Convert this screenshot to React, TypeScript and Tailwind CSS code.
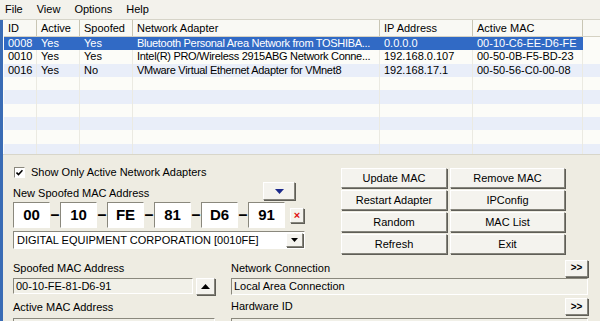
import React from 'react';

const cols = [
  { name: 'ID', w: 'w-[33px]' },
  { name: 'Active', w: 'w-[43px]' },
  { name: 'Spoofed', w: 'w-[53px]' },
  { name: 'Network Adapter', w: 'w-[247px]' },
  { name: 'IP Address', w: 'w-[93px]' },
  { name: 'Active MAC', w: 'w-[110px]' },
];

const rows = [
  ['0008', 'Yes', 'Yes', 'Bluetooth Personal Area Network from TOSHIBA...', '0.0.0.0', '00-10-C6-EE-D6-FE'],
  ['0010', 'Yes', 'Yes', 'Intel(R) PRO/Wireless 2915ABG Network Conne...', '192.168.0.107', '00-50-0B-F5-BD-23'],
  ['0016', 'Yes', 'No', 'VMware Virtual Ethernet Adapter for VMnet8', '192.168.17.1', '00-50-56-C0-00-08'],
];

const macParts = ['00', '10', 'FE', '81', 'D6', '91'];

const raised = 'border border-t-white border-l-white border-r-[#85847b] border-b-[#85847b] shadow-[1px_1px_0_#5f5e57] bg-[#f4f3ee]';
const sunken = 'border border-t-[#8a887d] border-l-[#8a887d] border-b-white border-r-white';

const Btn = ({ label }: { label: string }) => (
  <div className={`h-[20px] flex items-center justify-center text-[11px] text-black ${raised}`}>{label}</div>
);

const SmallBtn = ({ children, w }: { children: React.ReactNode; w: string }) => (
  <div className={`${w} h-[17px] flex items-center justify-center ${raised}`}>{children}</div>
);

export default function App() {
  return (
    <div className="w-[600px] h-[321px] overflow-hidden flex flex-col bg-[#eeece2] text-black text-[11px] font-['Liberation_Sans',Arial,sans-serif]">
      {/* Menu */}
      <div className="h-[20px] shrink-0 flex items-center gap-[14px] pl-[5px] bg-[#f3f2ec] border-b border-[#d6d4c8]">
        <span>File</span>
        <span>View</span>
        <span>Options</span>
        <span>Help</span>
      </div>

      <div className="flex-1 flex flex-col border-l-[3px] border-[#3a6cb5]">
        {/* List */}
        <div className="h-[135px] shrink-0 flex flex-col bg-[#fcfcf8] pl-[1px] overflow-hidden border-b border-[#d8d6ca]">
          <div className="h-[17px] shrink-0 flex bg-[#f9f9f4] border-b border-[#d5d2c3]">
            {cols.map((c) => (
              <div key={c.name} className={`${c.w} shrink-0 pl-[4px] flex items-center border-r border-[#c9c6b4] whitespace-nowrap`}>
                {c.name}
              </div>
            ))}
            <div className="flex-1" />
          </div>
          {Array.from({ length: 9 }).map((_, i) => {
            const r = rows[i];
            const selected = i === 0;
            const bg = selected ? '' : i % 2 === 0 ? 'bg-[#e9eef9]' : 'bg-[#fcfcf8]';
            return (
              <div key={i} className={`h-[13.33px] shrink-0 flex ${bg}`}>
                <div className={`flex ${selected ? 'bg-[#316ac5] text-white' : ''}`}>
                  {cols.map((c, j) => (
                    <div
                      key={c.name}
                      className={`${c.w} shrink-0 pl-[4px] flex items-center whitespace-nowrap overflow-hidden leading-none ${j === 3 ? 'tracking-[-0.3px]' : ''} ${selected ? '' : 'border-r border-[#ebeae2]'}`}
                    >
                      {r ? r[j] : ''}
                    </div>
                  ))}
                </div>
                <div className="flex-1" />
              </div>
            );
          })}
        </div>

        {/* Lower panel */}
        <div className="flex-1 flex flex-col pl-[10px] pt-[11px]">
          <div className="flex">
            <div className="w-[292px] flex flex-col">
              <div className="h-[12px] flex items-center gap-[6px] pl-[1px]">
                <div className={`w-[11px] h-[11px] bg-white flex items-center justify-center ${sunken}`}>
                  <svg width="7" height="7" viewBox="0 0 7 7">
                    <path d="M0.5 3.5 L2.5 5.5 L6.5 1.2" stroke="#000" strokeWidth="1.6" fill="none" />
                  </svg>
                </div>
                <span>Show Only Active Network Adapters</span>
              </div>
              <div className="h-[18px] mt-[4px] flex items-end justify-between">
                <span className="leading-[13px]">New Spoofed MAC Address</span>
                <div className={`w-[32px] h-[18px] mr-[10px] flex items-center justify-center ${raised}`}>
                  <svg width="9" height="5" viewBox="0 0 9 5">
                    <path d="M0 0 L9 0 L4.5 5 Z" fill="#1c2a8c" />
                  </svg>
                </div>
              </div>
              <div className="h-[26px] mt-[2px] flex items-center">
                {macParts.map((p, i) => (
                  <React.Fragment key={i}>
                    {i > 0 && <div className="w-[10px] flex justify-center text-[16px] font-bold">–</div>}
                    <div className={`w-[37px] h-[26px] bg-white flex items-center justify-center text-[15px] font-bold ${sunken}`}>{p}</div>
                  </React.Fragment>
                ))}
                <div className={`w-[14px] h-[15px] ml-[5px] flex items-center justify-center ${raised}`}>
                  <span className="text-[#e01010] text-[11px] font-bold leading-none">×</span>
                </div>
              </div>
              <div className={`h-[18px] mt-[3px] flex items-center bg-white ${sunken}`}>
                <span className="flex-1 pl-[3px] whitespace-nowrap">DIGITAL EQUIPMENT CORPORATION [0010FE]</span>
                <div className={`w-[17px] h-[14px] mr-[1px] flex items-center justify-center ${raised}`}>
                  <svg width="7" height="4" viewBox="0 0 7 4">
                    <path d="M0 0 L7 0 L3.5 4 Z" fill="#000" />
                  </svg>
                </div>
              </div>
            </div>

            <div className="ml-[36px] mt-[2px] grid grid-cols-[106px_115px] gap-x-[3px] gap-y-[2px]">
              <Btn label="Update MAC" />
              <Btn label="Remove MAC" />
              <Btn label="Restart Adapter" />
              <Btn label="IPConfig" />
              <Btn label="Random" />
              <Btn label="MAC List" />
              <Btn label="Refresh" />
              <Btn label="Exit" />
            </div>
          </div>

          <div className="flex mt-[4px] gap-[16px]">
            <div className="w-[202px] flex flex-col">
              <div className="h-[20px] flex items-center">Spoofed MAC Address</div>
              <div className="h-[18px] flex gap-[3px]">
                <div className={`flex-1 h-[16px] flex items-center pl-[2px] bg-[#f1f0e8] ${sunken}`}>00-10-FE-81-D6-91</div>
                <div className={`w-[19px] h-[17px] flex items-center justify-center ${raised}`}>
                  <svg width="9" height="5" viewBox="0 0 9 5">
                    <path d="M0 5 L9 5 L4.5 0 Z" fill="#000" />
                  </svg>
                </div>
              </div>
              <div className="h-[22px] flex items-center">Active MAC Address</div>
              <div className={`h-[16px] bg-[#f1f0e8] ${sunken}`} />
            </div>

            <div className="w-[357px] flex flex-col">
              <div className="h-[20px] flex items-center justify-between">
                <span>Network Connection</span>
                <SmallBtn w="w-[23px]"><span className="text-[10px] font-bold leading-none">&gt;&gt;</span></SmallBtn>
              </div>
              <div className={`h-[17px] flex items-center pl-[2px] bg-[#f1f0e8] ${sunken}`}>Local Area Connection</div>
              <div className="h-[23px] flex items-center justify-between">
                <span>Hardware ID</span>
                <SmallBtn w="w-[23px]"><span className="text-[10px] font-bold leading-none">&gt;&gt;</span></SmallBtn>
              </div>
              <div className={`h-[16px] bg-[#f1f0e8] ${sunken}`} />
            </div>
          </div>
        </div>
      </div>
    </div>
  );
}
